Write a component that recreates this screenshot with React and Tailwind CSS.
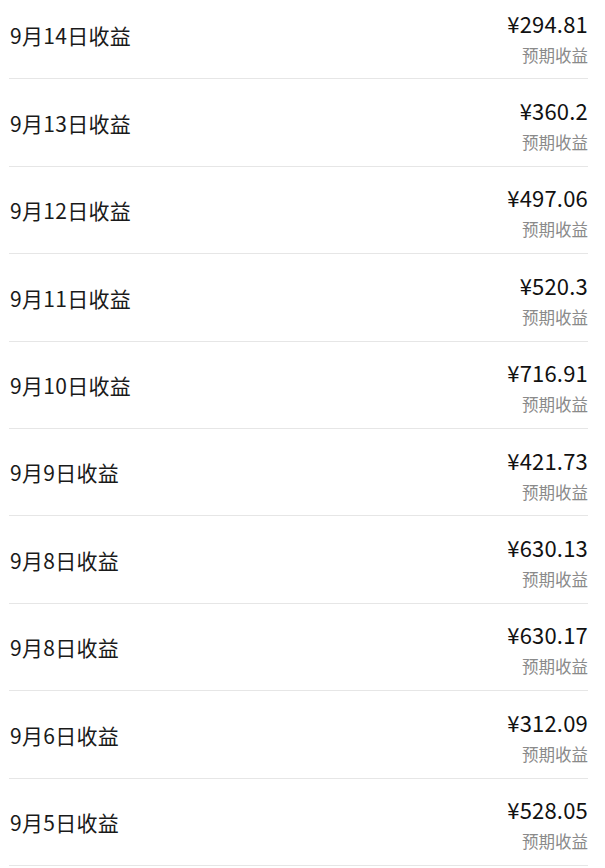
const rows = [
  { day: "9月14日收益", amount: "¥294.81" },
  { day: "9月13日收益", amount: "¥360.2" },
  { day: "9月12日收益", amount: "¥497.06" },
  { day: "9月11日收益", amount: "¥520.3" },
  { day: "9月10日收益", amount: "¥716.91" },
  { day: "9月9日收益", amount: "¥421.73" },
  { day: "9月8日收益", amount: "¥630.13" },
  { day: "9月8日收益", amount: "¥630.17" },
  { day: "9月6日收益", amount: "¥312.09" },
  { day: "9月5日收益", amount: "¥528.05" },
];

const App = () => {
  return (
    <div
      className="min-h-screen bg-white overflow-hidden"
      style={{ fontFamily: '"Noto Sans CJK SC", "Noto Sans", sans-serif' }}
    >
      <ul className="-mt-[8px] pl-[9px] pr-[17px]">
        {rows.map((r, i) => (
          <li
            key={i}
            className="h-[87.4px] pt-[4px] flex items-center justify-between border-b border-[#e6e6e6]"
          >
            <span className="text-[21px] tracking-[0.3px] text-[#1a1a1a] pl-px mb-[2px]">{r.day}</span>
            <div className="flex flex-col items-end mt-[1px]">
              <span className="text-[22px] leading-[28px] tracking-[0.2px] text-[#111]">{r.amount}</span>
              <span className="text-[16.5px] leading-[24px] mt-[6px] text-[#8a8a8a]">预期收益</span>
            </div>
          </li>
        ))}
      </ul>
    </div>
  );
};

export default App;
